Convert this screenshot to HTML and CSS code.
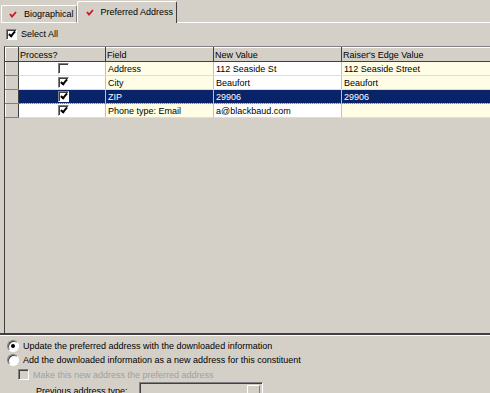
FILE: index.html
```html
<!DOCTYPE html>
<html lang="en">
<head>
    <meta charset="UTF-8">
    <title>Preferred Address</title>
    <link rel="stylesheet" href="styles.css">
</head>
<body>
    <div class="tabs">
        <div class="tab">
            <svg class="tick" width="8" height="7" viewBox="0 0 8 7"><polyline points="1,3 3,5.5 7,1" fill="none" stroke="#d0141e" stroke-width="1.8"/></svg>
            Biographical
        </div>
        <div class="tab active">
            <svg class="tick" width="8" height="7" viewBox="0 0 8 7"><polyline points="1,3 3,5.5 7,1" fill="none" stroke="#d0141e" stroke-width="1.8"/></svg>
            Preferred Address
        </div>
        <div class="tab-rest"></div>
    </div>

    <div class="panel">
        <label class="select-all"><span class="box checked"></span>Select All</label>

        <div class="grid">
            <table>
                <colgroup>
                    <col class="c-sel">
                    <col class="c-proc">
                    <col class="c-field">
                    <col class="c-new">
                    <col class="c-re">
                </colgroup>
                <tr class="head">
                    <th></th>
                    <th>Process?</th>
                    <th>Field</th>
                    <th>New Value</th>
                    <th>Raiser's Edge Value</th>
                </tr>
                <tr>
                    <td class="sel"></td>
                    <td class="proc"><span class="box"></span></td>
                    <td class="cream">Address</td>
                    <td>112 Seaside St</td>
                    <td class="cream">112 Seaside Street</td>
                </tr>
                <tr>
                    <td class="sel"></td>
                    <td class="proc"><span class="box checked"></span></td>
                    <td class="cream">City</td>
                    <td>Beaufort</td>
                    <td class="cream">Beaufort</td>
                </tr>
                <tr class="current">
                    <td class="sel"></td>
                    <td class="proc"><span class="box checked"></span></td>
                    <td>ZIP</td>
                    <td>29906</td>
                    <td>29906</td>
                </tr>
                <tr>
                    <td class="sel"></td>
                    <td class="proc"><span class="box checked"></span></td>
                    <td class="cream">Phone type: Email</td>
                    <td>a@blackbaud.com</td>
                    <td class="cream"></td>
                </tr>
            </table>
        </div>

        <div class="options">
            <label class="opt"><span class="radio on"></span>Update the preferred address with the downloaded information</label>
            <label class="opt"><span class="radio"></span>Add the downloaded information as a new address for this constituent</label>
            <label class="opt sub disabled"><span class="box"></span>Make this new address the preferred address</label>
            <div class="prev">
                <span>Previous address type:</span>
                <div class="combo"><span class="arrow">&#9660;</span></div>
            </div>
        </div>
    </div>
</body>
</html>
```

FILE: styles.css
```css
/* Windows classic look */
body {
    margin: 0;
    background-color: #d4d0c8;
    font-family: 'Liberation Sans', Arial, sans-serif;
    font-size: 9px;
    color: #000;
    width: 490px;
    height: 393px;
    overflow: hidden;
}

/* Tabs */
.tabs {
    display: flex;
    align-items: flex-end;
    height: 23px;
    padding-left: 1px;
}
.tab {
    display: flex;
    align-items: center;
    height: 16px;
    padding: 0 2px 0 7px;
    border-top: 1px solid #fff;
    border-left: 1px solid #fff;
    border-right: 1px solid #808080;
    border-bottom: 1px solid #fff;
    border-radius: 2px 2px 0 0;
    white-space: nowrap;
}
.tab.active {
    height: 20px;
    border-bottom: none;
    border-right: 1px solid #404040;
    padding: 0 3px 1px 8px;
}
.tab-rest {
    flex: 1;
    border-bottom: 1px solid #fff;
}
.tick {
    margin-right: 7px;
    flex: none;
}

/* Checkboxes and radios */
.box {
    display: inline-block;
    width: 9px;
    height: 9px;
    background: #fff;
    border-top: 1px solid #808080;
    border-left: 1px solid #808080;
    border-right: 1px solid #fff;
    border-bottom: 1px solid #fff;
    box-shadow: inset 1px 1px 0 #404040;
    position: relative;
    vertical-align: middle;
}
.box.checked::after {
    content: '';
    position: absolute;
    left: 3px;
    top: 0px;
    width: 2px;
    height: 5px;
    border: solid #000;
    border-width: 0 2px 2px 0;
    transform: rotate(40deg);
}
.radio {
    display: inline-block;
    width: 10px;
    height: 10px;
    border-radius: 50%;
    background: #fff;
    border: 1px solid;
    border-color: #808080 #fff #fff #808080;
    box-shadow: inset 1px 1px 0 #404040;
    position: relative;
    vertical-align: middle;
    margin-right: 4px;
}
.radio.on::after {
    content: '';
    position: absolute;
    left: 3px;
    top: 3px;
    width: 4px;
    height: 4px;
    border-radius: 50%;
    background: #000;
}

.panel {
    padding-top: 4px;
}
.select-all {
    display: flex;
    align-items: center;
    gap: 4px;
    margin-left: 6px;
    height: 14px;
}

/* Grid */
.grid {
    margin: 5px 0 0 4px;
    height: 286px;
    border-left: 1px solid #404040;
    border-top: 1px solid #808080;
}
table {
    border-collapse: collapse;
    table-layout: fixed;
    width: 486px;
}
.c-sel { width: 13px; }
.c-proc { width: 87px; }
.c-field { width: 108px; }
.c-new { width: 128px; }
.c-re { width: 150px; }

th, td {
    height: 13px;
    padding: 0 2px;
    white-space: nowrap;
    overflow: hidden;
    text-align: left;
    font-weight: normal;
    border-right: 1px solid #c0c0c0;
    border-bottom: 1px solid #e0ddd6;
}
th {
    background: #d4d0c8;
    padding-left: 1px;
    border-top: 1px solid #fff;
    border-left: 1px solid #fff;
    border-right: 1px solid #404040;
    border-bottom: 1px solid #404040;
}
td {
    background: #fff;
}
td.cream {
    background: #fffde6;
}
td.sel {
    background: #d4d0c8;
    border-top: 1px solid #fff;
    border-left: 1px solid #fff;
    border-right: 1px solid #404040;
    border-bottom: 1px solid #808080;
}
td.proc {
    text-align: center;
    padding-left: 4px;
}
.current td:not(.sel) {
    background: #0a246a;
    color: #fff;
    border-top: 1px dotted #808080;
    border-bottom: 1px dotted #808080;
}

/* Bottom options */
.options {
    border-top: 1px solid #fff;
    box-shadow: 0 -2px 0 #404040;
    margin-top: 2px;
    padding: 3px 0 0 7px;
}
.opt {
    display: flex;
    align-items: center;
    height: 14px;
}
.opt.sub {
    margin: 0 0 0 11px;
    height: 15px;
}
.opt.sub .box {
    margin-right: 4px;
    background: #d4d0c8;
}
.disabled {
    color: #a0a0a0;
}
.prev {
    display: flex;
    align-items: flex-start;
    gap: 11px;
    margin: 0 0 0 29px;
}
.prev span {
    padding-top: 4px;
}
.combo {
    width: 122px;
    height: 16px;
    border: 1px solid;
    border-color: #808080 #fff #fff #808080;
    box-shadow: inset 1px 1px 0 #404040;
    display: flex;
    justify-content: flex-end;
}
.arrow {
    width: 11px;
    height: 12px;
    margin: 2px 2px 0 0;
    font-size: 6px;
    color: #a0a0a0;
    text-align: center;
    line-height: 12px;
    border: 1px solid;
    border-color: #fff #808080 #808080 #fff;
}
```
